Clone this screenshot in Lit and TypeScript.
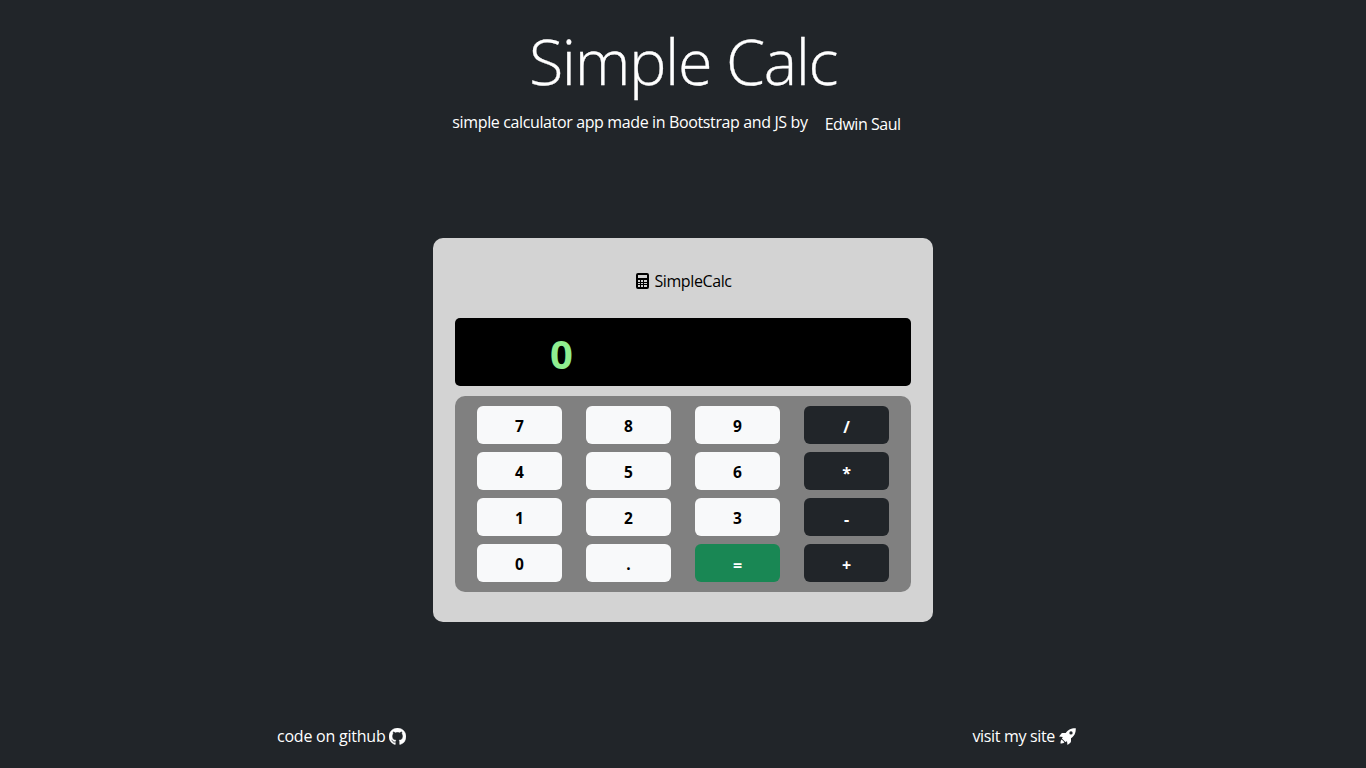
import { LitElement, html, css, svg } from 'lit';
import { customElement, state } from 'lit/decorators.js';

const KEYS = ['7', '8', '9', '/', '4', '5', '6', '*', '1', '2', '3', '-', '0', '.', '=', '+'];

const GITHUB = 'M8 0C3.580 0 0 3.580 0 8c0 3.540 2.290 6.530 5.470 7.590.4.070.55-.17.55-.38 0-.19-.01-.82-.01-1.490-2.010.37-2.530-.49-2.690-.94-.09-.23-.48-.94-.82-1.130-.28-.15-.68-.52-.01-.53.63-.01 1.080.58 1.230.82.72 1.210 1.870.87 2.330.66.070-.52.28-.87.51-1.070-1.780-.2-3.640-.89-3.640-3.950 0-.87.31-1.590.82-2.150-.08-.2-.36-1.020.080-2.120 0 0 .67-.21 2.200.82.64-.18 1.320-.27 2-.27s1.360.09 2 .27c1.530-1.040 2.200-.82 2.200-.82.44 1.100.16 1.920.080 2.120.51.56.82 1.270.82 2.150 0 3.070-1.870 3.750-3.650 3.950.29.25.54.73.54 1.480 0 1.070-.01 1.930-.01 2.200 0 .21.15.46.55.38A8.010 8.010 0 0 0 16 8c0-4.420-3.580-8-8-8z';

const ROCKET = 'M16.800.2C11.700.1 8.900 1.900 6.700 5H3.900C3 5 2.500 5.200 2 5.900L.1 8.500l3.700.5-.9 1.600 3.500 3.500L8 13.200l.5 3.700 2.600-1.900c.7-.5.9-1 .9-1.900v-2.800C15.100 8.100 16.900 5.300 16.800.2zM12 6.600a1.650 1.650 0 1 1 0-3.300 1.650 1.650 0 0 1 0 3.300zM2.700 11.600C1.500 12.500 1.600 14.200 1.500 15.500c1.300-.1 3 0 3.900-1.200z';

const calculatorIcon = svg`<svg class="icon calc" viewBox="0 0 13 16" fill-rule="evenodd"><path d="M2 0h9A2 2 0 0 1 13 2v12a2 2 0 0 1-2 2H2A2 2 0 0 1 0 14V2A2 2 0 0 1 2 0zM2 2v3h9V2zM2 7v2h2V7zm3 0v2h2V7zm3 0v2h3V7zM2 10v1h2v-1zm3 0v1h2v-1zm3 0v1h3v-1zM2 12v2h2v-2zm3 0v2h2v-2zm3 0v2h3v-2z"/></svg>`;

@customElement('app-root')
export class AppRoot extends LitElement {
  @state() private display = '0';

  static styles = css`
    :host { display: flex; flex-direction: column; align-items: center; box-sizing: border-box; height: 768px; background: #212529; color: #fff; font: 16px/24px "Open Sans", "Noto Sans", sans-serif; overflow: hidden; }
    h1 { margin: 22px 0 0; font-size: 63px; font-weight: 300; line-height: 77px; letter-spacing: -1.400px; white-space: nowrap; -webkit-text-stroke: .3px #fff; }
    .byline { display: flex; margin: 11px 13px 0 0; gap: 17px; white-space: nowrap; }
    .byline .author { padding-top: 2px; letter-spacing: -.46px; }
    .t { letter-spacing: -.3px; }
    .by { letter-spacing: -.37px; }
    .calculator { box-sizing: border-box; width: 500px; height: 384px; margin-top: 102px; padding: 31px 22px 0; border-radius: 10px; background: lightgray; color: #000; }
    .brand { display: flex; align-items: center; justify-content: center; height: 24px; gap: 5px; padding-left: 2px; }
    .name { letter-spacing: -.4px; }
    .screen { box-sizing: border-box; height: 68px; margin-top: 25px; padding: 12px 95px 0; border-radius: 5px; background: #000; color: lightgreen; font-size: 40px; font-weight: 700; line-height: 48px; }
    .keys { display: grid; grid-template-columns: repeat(4, 85px); grid-auto-rows: 38px; gap: 8px 24px; margin-top: 10px; padding: 10px 22px; border-radius: 10px; background: gray; }
    button { border: 0; margin: 0; padding: 2px 0 0; border-radius: 6px; background: #f8f9fa; color: #000; font: 700 15.500px/24px "Open Sans", sans-serif; }
    .operator { background: #212529; color: #fff; }
    .equals { background: #198754; color: #fff; }
    .operator, .equals { padding-top: 3px; font-size: 16px; }
    footer { display: flex; justify-content: space-between; width: 799px; margin: 102px 13px 0 0; }
    .link { display: flex; align-items: center; gap: 4px; white-space: nowrap; }
    .code { letter-spacing: -.23px; }
    .visit { letter-spacing: -.33px; }
    .icon { display: block; fill: currentColor; height: 17px; width: 17px; }
    .github { stroke: currentColor; stroke-width: .35px; }
    .calc { width: 13px; height: 16px; }
  `;

  private press(key: string) {
    this.display = this.display === '0' ? key : this.display + key;
  }

  render() {
    return html`
      <h1>Simple Calc</h1>
      <div class="byline"><span class="t by">simple calculator app made in Bootstrap and JS by</span><span class="t author">Edwin Saul</span></div>
      <main class="calculator">
        <div class="brand">${calculatorIcon}<span class="t name">SimpleCalc</span></div>
        <div class="screen">${this.display}</div>
        <div class="keys">
          ${KEYS.map((k) => html`<button class=${k === '=' ? 'equals' : '/*-+'.includes(k) ? 'operator' : ''} @click=${() => this.press(k)}>${k}</button>`)}
        </div>
      </main>
      <footer>
        <div class="link"><span class="t code">code on github</span><svg class="icon github" viewBox="0 0 16 16"><path d=${GITHUB}></path></svg></div>
        <div class="link"><span class="t visit">visit my site</span><svg class="icon" viewBox="0 0 17 17" fill-rule="evenodd"><path d=${ROCKET}></path></svg></div>
      </footer>`;
  }
}
